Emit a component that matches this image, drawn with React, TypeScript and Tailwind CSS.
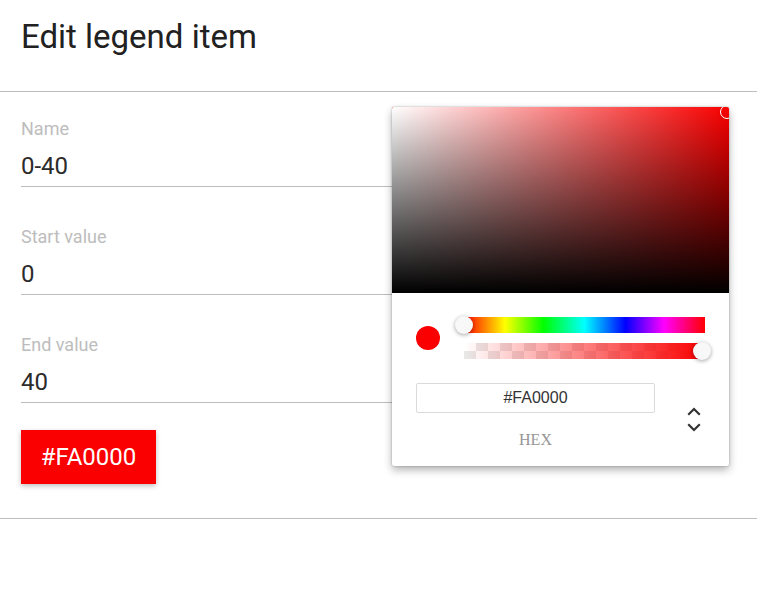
import React from "react";

function Field({ label, value }: { label: string; value: string }) {
  return (
    <div className="w-[600px] border-b border-[#bdbdbd]">
      <div className="h-[24px] text-[18px] leading-[24px] text-[#bdbdbd]">{label}</div>
      <div className="mt-[9px] h-[32px] pb-[4px] box-content text-[24px] leading-[32px] text-[#2b2b2b]">{value}</div>
    </div>
  );
}

export default function App() {
  return (
    <div
      className="relative w-[757px] h-[596px] bg-white overflow-hidden"
      style={{ fontFamily: "Roboto, 'Liberation Sans', sans-serif" }}
    >
      <div className="h-[92px] border-b border-[#bdbdbd] px-[21px] pt-[18px]">
        <h1 className="text-[33px] leading-[38px] font-normal text-[#212121]">Edit legend item</h1>
      </div>

      <div className="px-[21px] pt-[25px] flex flex-col gap-[38px]">
        <Field label="Name" value="0-40" />
        <Field label="Start value" value="0" />
        <Field label="End value" value="40" />
      </div>

      <div className="px-[21px] pt-[27px] pb-[34px] border-b border-[#bdbdbd]">
        <button className="w-[135px] h-[54px] bg-[#fa0000] text-white text-[24px] shadow-[0_2px_5px_rgba(0,0,0,0.25)] flex items-center justify-center">
          #FA0000
        </button>
      </div>

      {/* Color picker popover */}
      <div className="absolute left-[392px] top-[107px] w-[337px] h-[359px] bg-white rounded-[2px] shadow-[0_0_2px_rgba(0,0,0,0.3),0_4px_8px_rgba(0,0,0,0.3)]">
        <div className="relative h-[186px] overflow-hidden rounded-t-[2px] bg-[#fa0000]">
          <div className="absolute inset-0 bg-[linear-gradient(to_right,#fff,rgba(255,255,255,0))]" />
          <div className="absolute inset-0 bg-[linear-gradient(to_top,#000,rgba(0,0,0,0))]" />
          <div className="absolute left-[328px] top-[-2px] w-[14px] h-[14px] rounded-full border-[1.5px] border-white shadow-[0_0_1px_rgba(0,0,0,0.4)]" />
        </div>

        <div className="relative px-[24px] pt-[24px]">
          <div className="flex items-center">
            <div className="w-[48px] flex items-center">
              <div className="w-[24px] h-[24px] rounded-full bg-[#fa0000]" />
            </div>
            <div className="flex-1 flex flex-col gap-[10px]">
              <div className="relative h-[16px] w-[241px] bg-[linear-gradient(to_right,#f00_0%,#ff0_17%,#0f0_33%,#0ff_50%,#00f_67%,#f0f_83%,#f00_100%)]">
                <div className="absolute left-[-9px] top-[-1px] w-[18px] h-[18px] rounded-full bg-[#f8f8f8] shadow-[0_1px_4px_rgba(0,0,0,0.37)]" />
              </div>
              <div className="relative h-[16px] w-[241px]">
                <div className="absolute inset-0 bg-[repeating-conic-gradient(#e8e8e8_0%_25%,#ffffff_0%_50%)] bg-[length:24px_16px]" />
                <div className="absolute inset-0 bg-[linear-gradient(to_right,rgba(250,0,0,0),rgb(250,0,0))]" />
                <div className="absolute left-[229px] top-[-1px] w-[18px] h-[18px] rounded-full bg-[#f8f8f8] shadow-[0_1px_4px_rgba(0,0,0,0.37)]" />
              </div>
            </div>
          </div>

          <div className="flex mt-[24px]">
            <div className="w-[239px] flex flex-col items-center">
              <div
                className="w-[239px] h-[30px] border border-[#dadada] rounded-[2px] flex items-center justify-center text-[16px] text-[#333]"
                style={{ fontFamily: "'Liberation Sans', Arial, sans-serif" }}
              >
                #FA0000
              </div>
              <div
                className="mt-[17px] text-[16px] leading-[20px] text-[#969696]"
                style={{ fontFamily: "'Liberation Serif', 'Times New Roman', serif" }}
              >
                HEX
              </div>
            </div>
            <div className="flex-1 flex justify-center pt-[24px] pl-[28px]">
              <svg width="14" height="26" viewBox="0 0 14 26" fill="none" stroke="#333" strokeWidth="2.2" strokeLinecap="square">
                <polyline points="2,7 7,2 12,7" />
                <polyline points="2,18 7,23 12,18" />
              </svg>
            </div>
          </div>
        </div>
      </div>
    </div>
  );
}
